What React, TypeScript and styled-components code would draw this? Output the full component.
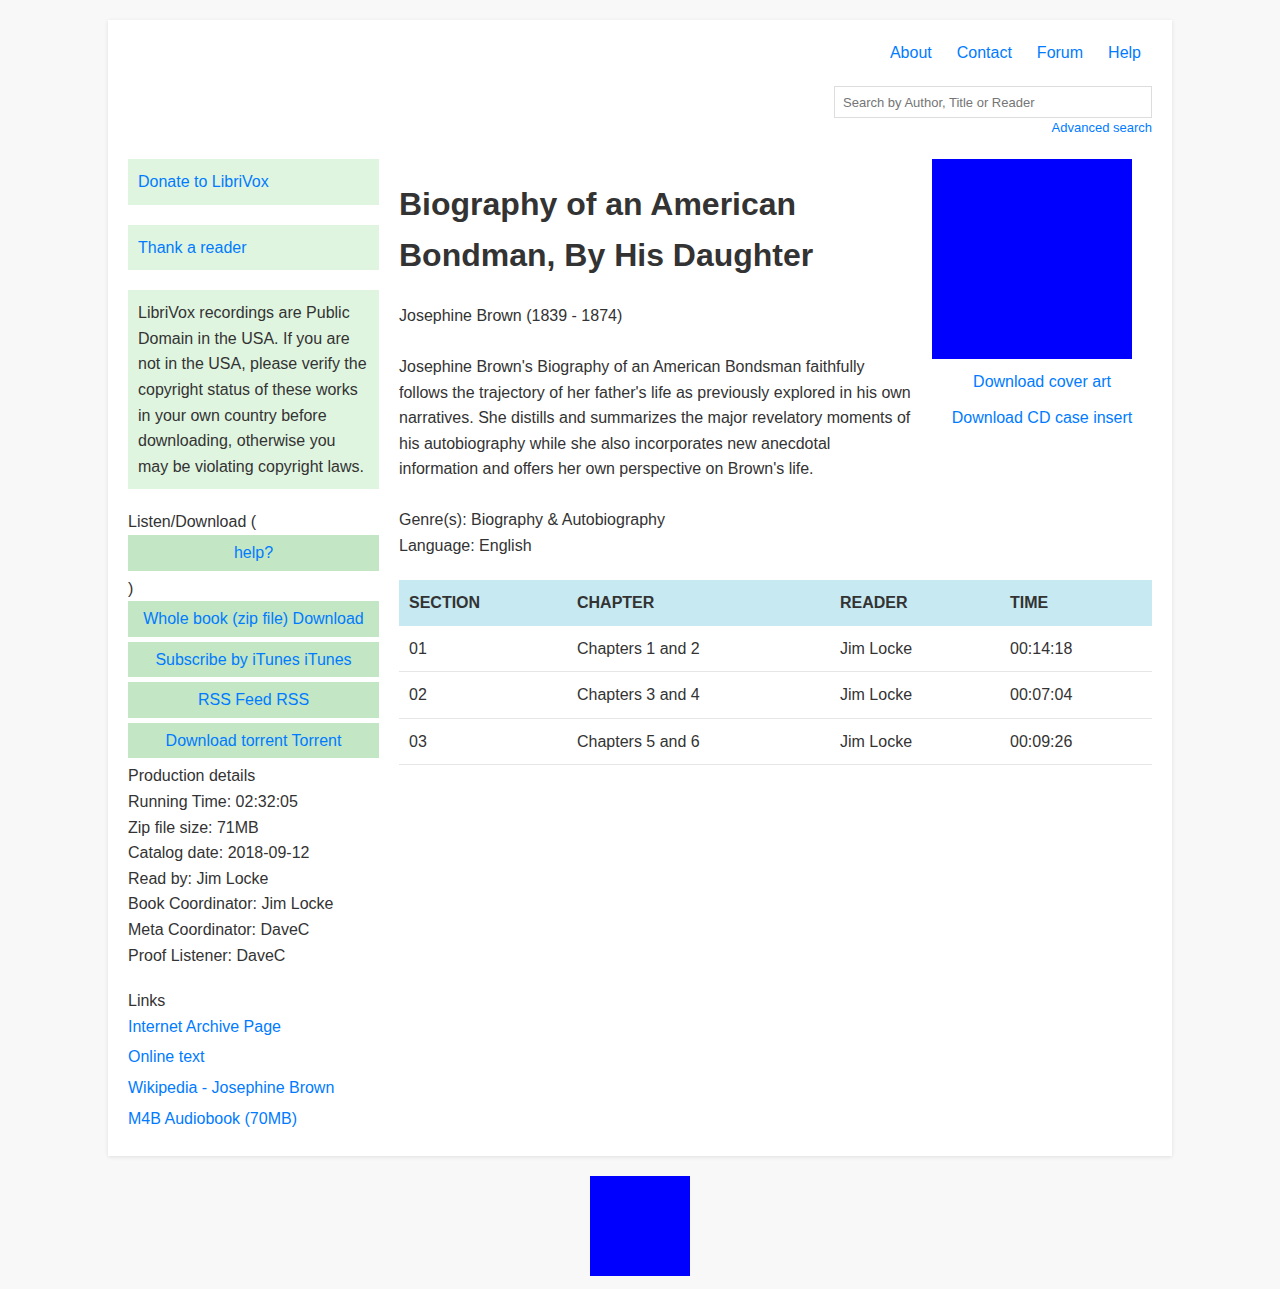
import React from "react";
import styled, { createGlobalStyle } from "styled-components";

const GlobalStyle = createGlobalStyle`
  html, body {
    margin: 0;
    padding: 0;
    background: #f8f8f8;
    color: #333;
    font-family: "Liberation Sans", Arial, Helvetica, sans-serif;
    font-size: 16px;
    line-height: 1.6;
  }
  * { box-sizing: border-box; }
  a { color: #007bff; text-decoration: none; }
`;

const Page = styled.div`
  padding: 20px 0 13px;
`;

const Container = styled.div`
  width: 1064px;
  margin: 0 auto;
  padding: 20px;
  background: #fff;
  box-shadow: 0 1px 4px rgba(0, 0, 0, 0.1);
`;

const Header = styled.header`
  display: flex;
  flex-direction: column;
  align-items: flex-end;
`;

const Nav = styled.nav`
  display: flex;
  gap: 25px;
  padding-right: 11px;
  height: 25.6px;
`;

const SearchInput = styled.input`
  margin-top: 20.6px;
  width: 318px;
  height: 32px;
  border: 1px solid #ddd;
  padding: 0 8px;
  font-family: inherit;
  font-size: 13px;
  color: #333;
  outline: none;
  &::placeholder { color: #757575; }
`;

const SmallLink = styled.a`
  font-size: 13px;
  line-height: 20.8px;
`;

const Body = styled.div`
  display: flex;
  gap: 20px;
  margin-top: 20px;
`;

const Sidebar = styled.aside`
  width: 251px;
  flex-shrink: 0;
`;

const Panel = styled.div`
  background: #e0f5e0;
  padding: 10px;
  margin-bottom: 20px;
`;

const Line = styled.div``;

const GreenButton = styled.a`
  display: block;
  background: #c3e6c5;
  text-align: center;
  padding: 5px;
  margin-bottom: 5px;
`;

const Section = styled.div<{ $top?: number }>`
  margin-top: ${(p) => p.$top ?? 0}px;
`;

const SideLink = styled.a`
  display: block;
  margin-bottom: 5px;
`;

const Main = styled.main`
  flex: 1;
  min-width: 0;
`;

const TopRow = styled.div`
  display: flex;
`;

const TextCol = styled.div`
  flex: 1;
  min-width: 0;
`;

const Title = styled.h1`
  font-size: 32px;
  line-height: 1.6;
  font-weight: bold;
  margin: 20px 0 22px;
`;

const Para = styled.p`
  margin: 0 0 25px;
`;

const CoverCol = styled.div`
  width: 220px;
  margin-left: 20px;
  flex-shrink: 0;
  text-align: center;
`;

const Cover = styled.div`
  width: 200px;
  height: 200px;
  background: #0000ff;
`;

const CoverLink = styled.a`
  display: block;
  margin-top: 10px;
`;

const Table = styled.table`
  width: 100%;
  border-collapse: collapse;
  margin-top: 22px;
`;

const Th = styled.th<{ $w: number }>`
  width: ${(p) => p.$w}px;
  text-align: left;
  padding: 10px;
  background: #c6e9f2;
  font-weight: bold;
  text-transform: uppercase;
`;

const Td = styled.td`
  padding: 10px;
  border-bottom: 1px solid #e6e6e6;
`;

const Footer = styled.div`
  display: flex;
  justify-content: center;
  margin-top: 20px;
`;

const FooterSquare = styled.div`
  width: 100px;
  height: 100px;
  background: #0000ff;
`;

const rows = [
  ["01", "Chapters 1 and 2", "Jim Locke", "00:14:18"],
  ["02", "Chapters 3 and 4", "Jim Locke", "00:07:04"],
  ["03", "Chapters 5 and 6", "Jim Locke", "00:09:26"],
];

export default function App() {
  return (
    <>
      <GlobalStyle />
      <Page>
        <Container>
          <Header>
            <Nav>
              <a href="#">About</a>
              <a href="#">Contact</a>
              <a href="#">Forum</a>
              <a href="#">Help</a>
            </Nav>
            <SearchInput placeholder="Search by Author, Title or Reader" />
            <SmallLink href="#">Advanced search</SmallLink>
          </Header>
          <Body>
            <Sidebar>
              <Panel>
                <a href="#">Donate to LibriVox</a>
              </Panel>
              <Panel>
                <a href="#">Thank a reader</a>
              </Panel>
              <Panel>
                LibriVox recordings are Public Domain in the USA. If you are not in the USA, please
                verify the copyright status of these works in your own country before downloading,
                otherwise you may be violating copyright laws.
              </Panel>
              <Line>Listen/Download (</Line>
              <GreenButton href="#">help?</GreenButton>
              <Line>)</Line>
              <GreenButton href="#">Whole book (zip file) Download</GreenButton>
              <GreenButton href="#">Subscribe by iTunes iTunes</GreenButton>
              <GreenButton href="#">RSS Feed RSS</GreenButton>
              <GreenButton href="#">Download torrent Torrent</GreenButton>
              <Section>
                <Line>Production details</Line>
                <Line>Running Time: 02:32:05</Line>
                <Line>Zip file size: 71MB</Line>
                <Line>Catalog date: 2018-09-12</Line>
                <Line>Read by: Jim Locke</Line>
                <Line>Book Coordinator: Jim Locke</Line>
                <Line>Meta Coordinator: DaveC</Line>
                <Line>Proof Listener: DaveC</Line>
              </Section>
              <Section $top={20}>
                <Line>Links</Line>
                <SideLink href="#">Internet Archive Page</SideLink>
                <SideLink href="#">Online text</SideLink>
                <SideLink href="#">Wikipedia - Josephine Brown</SideLink>
                <SideLink href="#">M4B Audiobook (70MB)</SideLink>
              </Section>
            </Sidebar>
            <Main>
              <TopRow>
                <TextCol>
                  <Title>Biography of an American Bondman, By His Daughter</Title>
                  <Para>Josephine Brown (1839 - 1874)</Para>
                  <Para>
                    Josephine Brown's Biography of an American Bondsman faithfully follows the
                    trajectory of her father's life as previously explored in his own narratives.
                    She distills and summarizes the major revelatory moments of his autobiography
                    while she also incorporates new anecdotal information and offers her own
                    perspective on Brown's life.
                  </Para>
                  <Line>Genre(s): Biography &amp; Autobiography</Line>
                  <Line>Language: English</Line>
                </TextCol>
                <CoverCol>
                  <Cover />
                  <CoverLink href="#">Download cover art</CoverLink>
                  <CoverLink href="#">Download CD case insert</CoverLink>
                </CoverCol>
              </TopRow>
              <Table>
                <thead>
                  <tr>
                    <Th $w={168}>Section</Th>
                    <Th $w={263}>Chapter</Th>
                    <Th $w={170}>Reader</Th>
                    <Th $w={152}>Time</Th>
                  </tr>
                </thead>
                <tbody>
                  {rows.map((r) => (
                    <tr key={r[0]}>
                      {r.map((c, i) => (
                        <Td key={i}>{c}</Td>
                      ))}
                    </tr>
                  ))}
                </tbody>
              </Table>
            </Main>
          </Body>
        </Container>
        <Footer>
          <FooterSquare />
        </Footer>
      </Page>
    </>
  );
}
